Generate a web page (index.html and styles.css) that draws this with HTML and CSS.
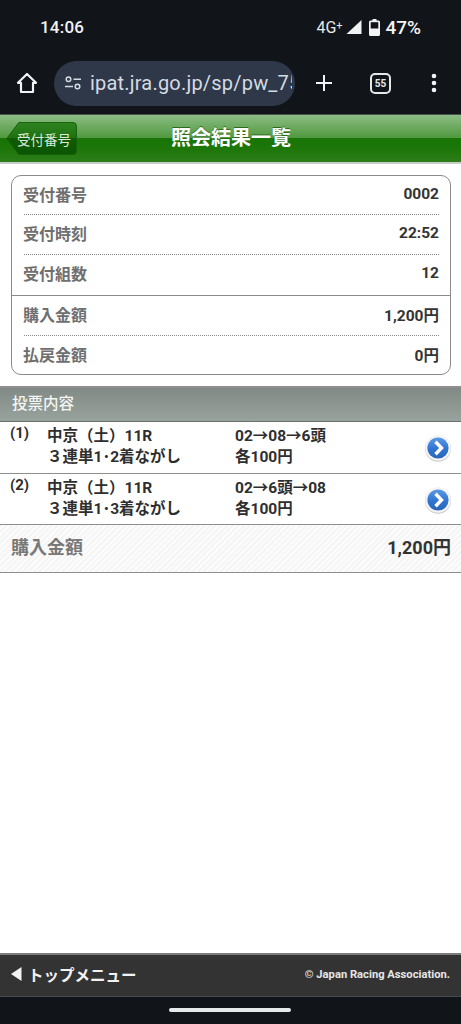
FILE: index.html
```html
<!DOCTYPE html>
<html lang="ja">
<head>
<meta charset="utf-8">
<title>照会結果一覧</title>
<link rel="stylesheet" href="styles.css">
</head>
<body>
<div class="screen">
  <div class="status">
    <span class="time">14:06</span>
    <div class="status-right">
      <span class="net">4G<sup>+</sup></span>
      <svg class="signal" width="16" height="16" viewBox="0 0 16 16"><path d="M15.5 1v14H.5z" fill="#f2f3f4"/></svg>
      <svg class="battery" width="11" height="17" viewBox="0 0 11 17"><path d="M3.5 0h4v1.5h2A1.5 1.5 0 0 1 11 3v12.5a1.5 1.5 0 0 1-1.500 1.500h-8A1.500 1.500 0 0 1 0 15.500V3a1.500 1.500 0 0 1 1.500-1.500h2z" fill="#f2f3f4"/><rect x="1.700" y="3.200" width="7.600" height="6.300" fill="#111418"/></svg>
      <span class="pct">47%</span>
    </div>
  </div>
  <div class="toolbar">
    <svg class="home" width="22" height="22" viewBox="0 0 22 22"><path d="M11 2 2 10.800h3V20h12v-9.200h3z" fill="none" stroke="#f2f3f4" stroke-width="2.200" stroke-linejoin="round"/></svg>
    <div class="omnibox">
      <svg class="tune" width="18" height="14" viewBox="0 0 18 14"><g fill="none" stroke="#d5dbe3" stroke-width="1.500"><circle cx="4.500" cy="3.200" r="2.300"/><path d="M9.500 3.200H17M1 10.500h8"/><circle cx="13.500" cy="10.500" r="2.300"/></g></svg>
      <span class="url">ipat.jra.go.jp/sp/pw_75</span>
    </div>
    <svg class="plus" width="18" height="18" viewBox="0 0 18 18"><path d="M9 1v16M1 9h16" stroke="#f2f3f4" stroke-width="2" fill="none"/></svg>
    <span class="tabs">55</span>
    <svg class="more" width="6" height="20" viewBox="0 0 6 20"><circle cx="3" cy="3" r="2.300" fill="#f2f3f4"/><circle cx="3" cy="10" r="2.300" fill="#f2f3f4"/><circle cx="3" cy="17" r="2.300" fill="#f2f3f4"/></svg>
  </div>
  <header class="title-bar">
    <a class="back">
      <svg class="back-shape" width="71" height="33" viewBox="0 0 72 34" preserveAspectRatio="none"><defs><linearGradient id="bk" x1="0" y1="0" x2="0" y2="1"><stop offset="0" stop-color="#2f8420"/><stop offset=".5" stop-color="#1d7010"/><stop offset=".5" stop-color="#0d5c03"/><stop offset="1" stop-color="#0b5502"/></linearGradient></defs><path d="M.8 17 13 .6h55A3.400 3.400 0 0 1 71.400 4v26a3.400 3.400 0 0 1-3.400 3.400H13z" fill="url(#bk)" stroke="#14600a" stroke-width="1"/></svg>
      <span class="back-label">受付番号</span>
    </a>
    <h1>照会結果一覧</h1>
  </header>
  <div class="card">
    <div class="row dotted"><span class="k">受付番号</span><span class="v">0002</span></div>
    <div class="row dotted"><span class="k">受付時刻</span><span class="v">22:52</span></div>
    <div class="row solid"><span class="k">受付組数</span><span class="v">12</span></div>
    <div class="row dotted"><span class="k">購入金額</span><span class="v">1,200円</span></div>
    <div class="row"><span class="k">払戻金額</span><span class="v">0円</span></div>
  </div>
  <div class="section">投票内容</div>
  <div class="bet">
    <span class="num">(1)</span>
    <div class="bet-main"><div>中京（土）11R</div><div class="kind">３連単1･2着ながし</div></div>
    <div class="bet-pick"><div>02→08→6頭</div><div>各100円</div></div>
    <span class="go"><svg width="28" height="28" viewBox="0 0 28 28"><use href="#go-icon"/></svg></span>
  </div>
  <div class="bet">
    <span class="num">(2)</span>
    <div class="bet-main"><div>中京（土）11R</div><div class="kind">３連単1･3着ながし</div></div>
    <div class="bet-pick"><div>02→6頭→08</div><div>各100円</div></div>
    <span class="go"><svg width="28" height="28" viewBox="0 0 28 28"><use href="#go-icon"/></svg></span>
  </div>
  <div class="total"><span class="total-k">購入金額</span><span class="total-v">1,200円</span></div>
  <div class="spacer"></div>
  <footer class="foot">
    <span class="top-link"><svg width="11" height="14" viewBox="0 0 11 14"><path d="M10.500 0v14L0 7z" fill="#f2f2f2"/></svg>トップメニュー</span>
    <span class="copy">© Japan Racing Association.</span>
  </footer>
  <div class="navbar"><span class="pill"></span></div>
</div>
<svg class="defs" width="0" height="0">
  <defs>
    <linearGradient id="gb" x1="0" y1="0" x2="0" y2="1"><stop offset="0" stop-color="#5b9be6"/><stop offset=".55" stop-color="#2f74d0"/><stop offset="1" stop-color="#2a66bb"/></linearGradient>
    <symbol id="go-icon" viewBox="0 0 28 28">
      <circle cx="14" cy="14.800" r="13" fill="#c9c9c9"/>
      <circle cx="14" cy="14" r="12.800" fill="#f4f4f4"/>
      <circle cx="14" cy="14" r="10.600" fill="url(#gb)"/>
      <path d="M11.500 7.800 17.500 14l-6 6.200" fill="none" stroke="#fff" stroke-width="3.400"/>
    </symbol>
  </defs>
</svg>
</body>
</html>
```

FILE: styles.css
```css
* { box-sizing: border-box; }
html, body { margin: 0; padding: 0; background: #fff; }
body { font-family: Roboto, "Noto Sans CJK JP", sans-serif; color: #2b2b2b; }
.defs { position: absolute; }
.screen { width: 461px; height: 1024px; display: flex; flex-direction: column; overflow: hidden; }

.status { height: 54px; background: #111418; color: #f2f3f4; display: flex; align-items: center; justify-content: space-between; padding: 0 40px; }
.time { font-size: 17px; font-weight: 500; letter-spacing: .2px; }
.status-right { display: flex; align-items: center; }
.net { font-size: 16px; color: #e8e9ea; width: 30px; white-space: nowrap; }
.net sup { font-size: 11px; line-height: 0; vertical-align: 4px; }
.signal { margin-left: 0; }
.battery { margin-left: 7px; }
.pct { font-size: 19px; font-weight: 500; margin-left: 5px; }

.toolbar { height: 60px; background: #111418; display: flex; align-items: center; position: relative; padding: 0 0 2px 16px; }
.home { flex: none; }
.omnibox { width: 241px; height: 45px; margin-left: 16px; border-radius: 23px; background: #2e3848; display: flex; align-items: center; padding: 0 3px 0 9px; flex: none; }
.tune { flex: none; margin-left: 1px; }
.url { font-size: 20px; line-height: 28px; color: #d5dbe3; margin-left: 8px; white-space: nowrap; letter-spacing: .2px; overflow: hidden; min-width: 0; }
.plus { margin-left: 20px; flex: none; }
.tabs { flex: none; width: 21px; height: 21px; margin-left: 37px; border: 2px solid #e6e7e8; border-radius: 5px; color: #e6e7e8; font-size: 10px; font-weight: 700; display: flex; align-items: center; justify-content: center; }
.more { margin-left: 40px; flex: none; }

.title-bar { height: 50px; flex: none; position: relative; display: flex; align-items: center; justify-content: center; padding-bottom: 2px; border-top: 1px solid #4a5254; border-bottom: 2px solid #c9cdc8; background: linear-gradient(#8bbd85, #52993f 48%, #187406 48%, #1c7608 70%, #2d7d19); }
.title-bar h1 { margin: 0 0 0 1px; font-size: 20px; line-height: 26px; font-weight: 700; color: #fff; text-shadow: 0 -1px 0 #2c6a20; }
.back { position: absolute; left: 6px; top: 7px; width: 71px; height: 33px; display: flex; align-items: center; justify-content: center; }
.back-shape { position: absolute; inset: 0; }
.back-label { position: relative; font-size: 13.500px; color: #dfe9db; padding-left: 5px; white-space: nowrap; }

.card { margin: 11px 10px 0 11px; height: 200px; flex: none; border: 1px solid #8a8a8a; border-radius: 10px; display: flex; flex-direction: column; }
.row { height: 40px; flex: none; margin: 0 11px 0 12px; display: flex; align-items: center; justify-content: space-between; padding-bottom: 4px; }
.row:first-child { height: 39px; padding-bottom: 3px; }
.row:last-child { height: 39px; padding-bottom: 3px; }
.row.dotted { border-bottom: 1px dotted #8a8a8a; }
.row.solid { height: 41px; margin: 0; padding: 0 11px 4px 12px; border-bottom: 1px solid #8a8a8a; }
.k { font-size: 16px; font-weight: 700; color: #6f6f6f; margin-left: -1px; }
.v { font-size: 15.500px; font-weight: 700; color: #333; }

.section { margin-top: 11px; height: 36px; flex: none; padding: 0 0 5px 12px; display: flex; align-items: center; font-size: 15.500px; font-weight: 500; color: #f3f5f3; border-top: 2px solid #8f8f8f; border-bottom: 1px solid #6e6e6e; background: linear-gradient(#818a85, #99a39e); }

.bet { height: 52px; flex: none; padding: 2px 0 0 10px; display: flex; align-items: flex-start; position: relative; font-size: 15.500px; line-height: 21px; font-weight: 700; color: #2e2e2e; border-bottom: 1px solid #8e8e8e; }
.bet + .bet { height: 51px; }
.num { width: 37px; font-size: 15px; line-height: 19px; flex: none; }
.bet-main { width: 188px; flex: none; padding-top: 2px; }
.bet-pick { padding-top: 2px; }
.go { position: absolute; right: 9px; top: 12px; width: 28px; height: 28px; }
.go svg { display: block; }

.total { height: 48px; flex: none; padding: 0 10px 5px 12px; display: flex; align-items: center; justify-content: space-between; border-bottom: 1px solid #8e8e8e; background: repeating-linear-gradient(135deg, #f5f5f5 0 2px, #fcfcfc 2px 4px); }
.total-k { font-size: 18px; font-weight: 700; color: #787878; margin-left: -1px; }
.total-v { font-size: 18px; font-weight: 700; color: #333; }

.spacer { flex: 1; }

.foot { height: 44px; flex: none; padding: 0 11px 3px 11px; background: #333; border-top: 2px solid #7c7c7c; border-bottom: 1px solid #454b50; display: flex; align-items: center; justify-content: space-between; color: #f2f2f2; }
.top-link { display: flex; align-items: center; gap: 6px; font-size: 15.500px; font-weight: 700; }
.copy { font-size: 11.200px; font-weight: 700; white-space: nowrap; color: #e6e6e6; }

.navbar { height: 27px; background: #111418; display: flex; justify-content: center; padding-top: 11px; flex: none; }
.pill { width: 122px; height: 4px; border-radius: 2px; background: #e8e9ea; margin-left: -1px; }
```
